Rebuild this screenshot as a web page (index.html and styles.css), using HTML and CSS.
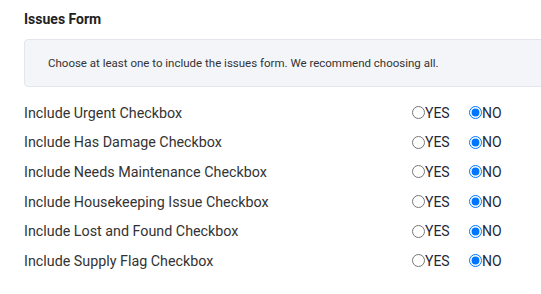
FILE: index.html
```html
<!DOCTYPE html>
<html lang="en">
  <head>
    <meta charset="UTF-8" />
    <meta name="viewport" content="width=device-width, initial-scale=1.0" />
    <title>Issues Form</title>
    <link rel="stylesheet" href="styles.css">
  </head>
  <body>
    <div class="settings-section">
      <h3 class="section-title">Issues Form</h3>

      <div class="info-box">
        <p>Choose at least one to include the issues form. We recommend choosing all.</p>
      </div>

      <form id="issuesForm" class="option-list">
        <div class="option-row">
          <span class="option-label">Include Urgent Checkbox</span>
          <div class="option-choices">
            <label><input type="radio" name="urgent" value="yes" />YES</label>
            <label><input type="radio" name="urgent" value="no" checked />NO</label>
          </div>
        </div>
        <div class="option-row">
          <span class="option-label">Include Has Damage Checkbox</span>
          <div class="option-choices">
            <label><input type="radio" name="damage" value="yes" />YES</label>
            <label><input type="radio" name="damage" value="no" checked />NO</label>
          </div>
        </div>
        <div class="option-row">
          <span class="option-label">Include Needs Maintenance Checkbox</span>
          <div class="option-choices">
            <label><input type="radio" name="maintenance" value="yes" />YES</label>
            <label><input type="radio" name="maintenance" value="no" checked />NO</label>
          </div>
        </div>
        <div class="option-row">
          <span class="option-label">Include Housekeeping Issue Checkbox</span>
          <div class="option-choices">
            <label><input type="radio" name="housekeeping" value="yes" />YES</label>
            <label><input type="radio" name="housekeeping" value="no" checked />NO</label>
          </div>
        </div>
        <div class="option-row">
          <span class="option-label">Include Lost and Found Checkbox</span>
          <div class="option-choices">
            <label><input type="radio" name="lostfound" value="yes" />YES</label>
            <label><input type="radio" name="lostfound" value="no" checked />NO</label>
          </div>
        </div>
        <div class="option-row">
          <span class="option-label">Include Supply Flag Checkbox</span>
          <div class="option-choices">
            <label><input type="radio" name="supply" value="yes" />YES</label>
            <label><input type="radio" name="supply" value="no" checked />NO</label>
          </div>
        </div>
      </form>
    </div>
  </body>
</html>
```

FILE: styles.css
```css
* {
  box-sizing: border-box;
}

body {
  margin: 0;
  padding: 0;
  background: #fff;
  font-family: Roboto, "Liberation Sans", sans-serif;
  color: #333;
  overflow: hidden;
}

.settings-section {
  width: 600px;
  padding: 11px 0 0 24px;
}

.section-title {
  margin: 0 0 12px;
  font-size: 14px;
  font-weight: bold;
  line-height: 16px;
  color: #222;
}

.info-box {
  background-color: #f4f5f9;
  border: 1px solid #e3e6ec;
  border-radius: 4px;
  padding: 15px 23px;
  margin-bottom: 11px;
}

.info-box p {
  margin: 0;
  font-size: 11.5px;
  line-height: 16px;
}

.option-row {
  display: flex;
  align-items: center;
  height: 29.6px;
  font-size: 14.3px;
}

.option-label {
  width: 388px;
}

.option-choices {
  display: flex;
  gap: 8px;
}

.option-choices label {
  display: flex;
  align-items: center;
  width: 49px;
  font-size: 14px;
  color: #1f2937;
}

.option-choices input {
  margin: 0;
  width: 13px;
  height: 13px;
}
```
